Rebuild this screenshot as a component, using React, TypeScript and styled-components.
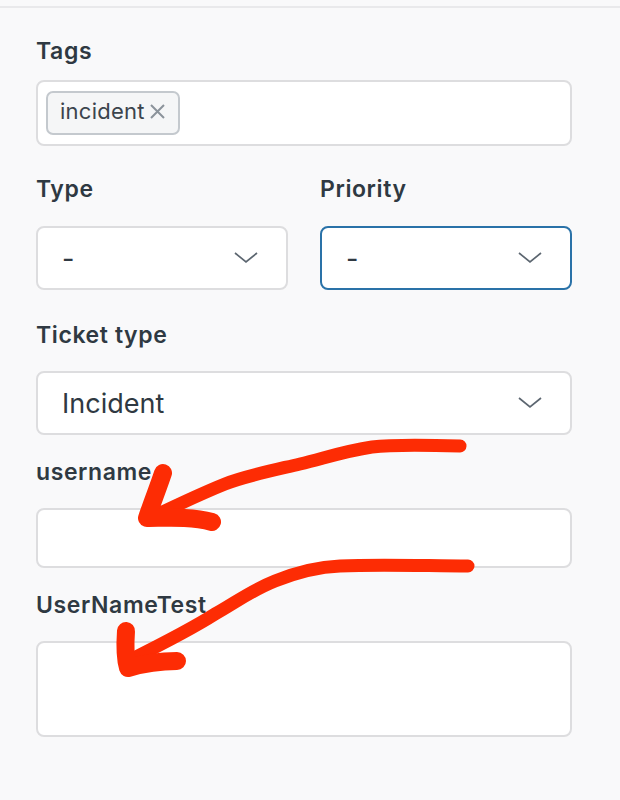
import React from "react";
import styled, { createGlobalStyle } from "styled-components";

const Global = createGlobalStyle`
  html, body { margin: 0; padding: 0; background: #f9f9fa; }
  body { font-family: Inter, "Liberation Sans", sans-serif; }
`;

const Page = styled.div`
  position: relative;
  width: 620px;
  height: 800px;
  overflow: hidden;
  box-sizing: border-box;
  background: #f9f9fa;
  padding: 6px 48px 0 36px;
`;

const Form = styled.div`
  display: flex;
  flex-direction: column;
`;

const Rule = styled.div`
  height: 2px;
  margin: 0 -48px 0 -36px;
  background: #e9e9eb;
`;

const Label = styled.label<{ $top: number; $bottom: number }>`
  display: block;
  margin: ${(p) => p.$top}px 0 ${(p) => p.$bottom}px;
  font-size: 23px;
  letter-spacing: 0.6px;
  line-height: 28px;
  font-weight: 600;
  color: #2f3942;
`;

const TagBox = styled.div`
  box-sizing: border-box;
  height: 66px;
  display: flex;
  align-items: center;
  padding: 0 8px;
  background: #fff;
  border: 2px solid #dddddf;
  border-radius: 8px;
`;

const Chip = styled.span`
  box-sizing: border-box;
  width: 134px;
  height: 44px;
  display: flex;
  align-items: center;
  gap: 5px;
  padding: 0 0 5px 12px;
  background: #f5f6f7;
  border: 2px solid #c4c9ce;
  border-radius: 7px;
  font-size: 22px;
  letter-spacing: 0.25px;
  color: #3b444d;
`;

const CrossWrap = styled.span`
  display: flex;
  margin-top: 2px;
`;

const Row = styled.div`
  display: grid;
  grid-template-columns: 252px 252px;
  column-gap: 32px;
`;

const Field = styled.div`
  display: flex;
  flex-direction: column;
`;

const Select = styled.div<{ $h: number; $focus?: boolean }>`
  box-sizing: border-box;
  height: ${(p) => p.$h}px;
  display: flex;
  align-items: center;
  justify-content: space-between;
  padding: 0 28px 0 24px;
  background: #fff;
  border: 2px solid ${(p) => (p.$focus ? "#2a72a8" : "#dddddf")};
  border-radius: 8px;
  font-size: 27px;
  color: #2f3942;
`;

const Value = styled.span`
  line-height: 32px;
  padding-top: 2px;
`;

const Input = styled.div<{ $h: number }>`
  box-sizing: border-box;
  height: ${(p) => p.$h}px;
  background: #fff;
  border: 2px solid #dddddf;
  border-radius: 8px;
`;

const Marks = styled.svg`
  position: absolute;
  inset: 0;
  width: 620px;
  height: 800px;
  pointer-events: none;
`;

const Chevron = () => (
  <svg width="24" height="12" viewBox="0 0 24 12" fill="none" stroke="#5c6670" strokeWidth="1.7">
    <path d="M1 1l11 9L23 1" />
  </svg>
);

const Cross = () => (
  <CrossWrap>
    <svg width="15" height="15" viewBox="0 0 15 15" fill="none" stroke="#8b939b" strokeWidth="2">
      <path d="M1 1l13 13M14 1L1 14" />
    </svg>
  </CrossWrap>
);

export default function App() {
  return (
    <Page>
      <Global />
      <Rule />
      <Form>
        <Label $top={29} $bottom={15}>Tags</Label>
        <TagBox>
          <Chip>
            incident
            <Cross />
          </Chip>
        </TagBox>
        <Row>
          <Field>
            <Label $top={29} $bottom={23}>Type</Label>
            <Select $h={64}>
              <Value>-</Value>
              <Chevron />
            </Select>
          </Field>
          <Field>
            <Label $top={29} $bottom={23}>Priority</Label>
            <Select $h={64} $focus>
              <Value>-</Value>
              <Chevron />
            </Select>
          </Field>
        </Row>
        <Label $top={31} $bottom={22}>Ticket type</Label>
        <Select $h={64}>
          <Value>Incident</Value>
          <Chevron />
        </Select>
        <Label $top={23} $bottom={22}>username</Label>
        <Input $h={60} />
        <Label $top={23} $bottom={22}>UserNameTest</Label>
        <Input $h={96} />
      </Form>
      <Marks viewBox="0 0 620 800" fill="none" stroke="#fd2c04" strokeLinecap="round" strokeLinejoin="round">
        <path strokeWidth="13" d="M460 446C430 445 395 444 372 447C345 451 325 458 300 464C270 471 245 476 225 484C200 494 175 506 150 518" />
        <path strokeWidth="18" d="M163 473C158 488 152 503 147 518C165 518 190 516 212 522" />
        <path strokeWidth="13" d="M468 566C430 566 380 564 340 566C315 567 295 573 275 581C250 591 235 603 215 614C190 630 160 645 130 660" />
        <path strokeWidth="18" d="M126 631C125 645 125 658 128 668C145 663 160 661 177 661" />
      </Marks>
    </Page>
  );
}
